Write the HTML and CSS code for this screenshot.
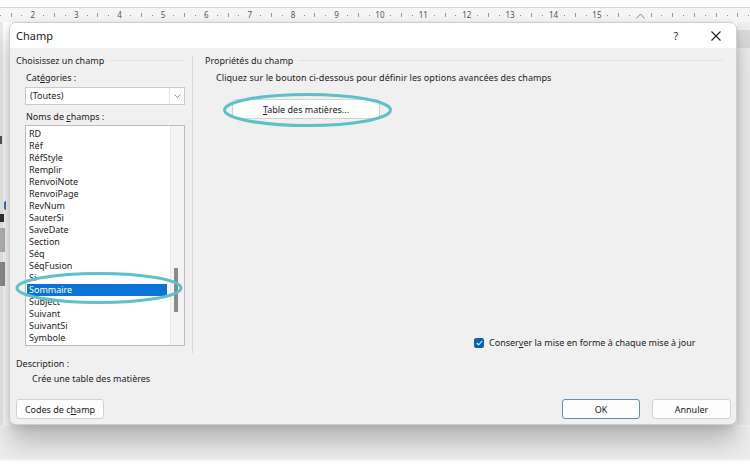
FILE: index.html
```html
<!DOCTYPE html>
<html lang="fr">
<head>
  <meta charset="UTF-8" />
  <title>Champ</title>
  <link rel="stylesheet" href="styles.css">
</head>
<body>

  <div class="ruler-top"></div>
  <div class="ruler">
    <div class="cm first"><span class="num"></span><i class="dot"></i><i class="tick"></i><i class="dot"></i></div>
    <div class="cm"><span class="num">2</span><i class="dot"></i><i class="tick"></i><i class="dot"></i></div>
    <div class="cm"><span class="num">3</span><i class="dot"></i><i class="tick"></i><i class="dot"></i></div>
    <div class="cm"><span class="num">4</span><i class="dot"></i><i class="tick"></i><i class="dot"></i></div>
    <div class="cm"><span class="num">5</span><i class="dot"></i><i class="tick"></i><i class="dot"></i></div>
    <div class="cm"><span class="num">6</span><i class="dot"></i><i class="tick"></i><i class="dot"></i></div>
    <div class="cm"><span class="num">7</span><i class="dot"></i><i class="tick"></i><i class="dot"></i></div>
    <div class="cm"><span class="num">8</span><i class="dot"></i><i class="tick"></i><i class="dot"></i></div>
    <div class="cm"><span class="num">9</span><i class="dot"></i><i class="tick"></i><i class="dot"></i></div>
    <div class="cm"><span class="num">10</span><i class="dot"></i><i class="tick"></i><i class="dot"></i></div>
    <div class="cm"><span class="num">11</span><i class="dot"></i><i class="tick"></i><i class="dot"></i></div>
    <div class="cm"><span class="num">12</span><i class="dot"></i><i class="tick"></i><i class="dot"></i></div>
    <div class="cm"><span class="num">13</span><i class="dot"></i><i class="tick"></i><i class="dot"></i></div>
    <div class="cm"><span class="num">14</span><i class="dot"></i><i class="tick"></i><i class="dot"></i></div>
    <div class="cm"><span class="num">15</span><i class="dot"></i><i class="tick"></i><i class="dot"></i></div>
    <div class="cm"><span class="num caret">
      <svg width="9" height="6" viewBox="0 0 9 6"><path d="M0.5 5.5 L4.5 1 L8.5 5.5" fill="none" stroke="#888" stroke-width="1"/></svg>
    </span><i class="tick"></i><i class="dot"></i><i class="tick"></i></div>
    <div class="cm"><i class="dot"></i><i class="tick"></i><i class="dot"></i><i class="tick"></i></div>
    <div class="cm"><i class="dot"></i><i class="tick"></i><i class="dot"></i><i class="tick"></i></div>
  </div>

  <div class="desk">
    <div class="doc-edge">
      <span class="mark mark-n"></span>
      <span class="mark mark-paren"></span>
      <span class="mark mark-e"></span>
      <span class="mark mark-block"></span>
      <span class="mark mark-block dark"></span>
    </div>

    <div class="dialog">
      <div class="titlebar">
        <span class="title">Champ</span>
        <span class="tb-btn help">?</span>
        <span class="tb-btn close">
          <svg width="10" height="10" viewBox="0 0 10 10"><path d="M0.5 0.5 L9.5 9.5 M9.5 0.5 L0.5 9.5" stroke="#222" stroke-width="1.1" fill="none"/></svg>
        </span>
      </div>

      <div class="dlg-body">
        <div class="panes">
          <div class="pane pane-left">
            <div class="group-title">Choisissez un champ</div>
            <div class="field-label">Cat<u>é</u>gories :</div>
            <div class="select">
              <span class="select-value">(Toutes)</span>
              <span class="select-arrow">
                <svg width="7" height="4" viewBox="0 0 7 4"><path d="M0.5 0.5 L3.5 3.5 L6.5 0.5" fill="none" stroke="#8a8a8a" stroke-width="1"/></svg>
              </span>
            </div>
            <div class="field-label names">Noms de <u>c</u>hamps :</div>
            <div class="listbox">
              <ul class="items">
                <li>RD</li>
                <li>Réf</li>
                <li>RéfStyle</li>
                <li>Remplir</li>
                <li>RenvoiNote</li>
                <li>RenvoiPage</li>
                <li>RevNum</li>
                <li>SauterSi</li>
                <li>SaveDate</li>
                <li>Section</li>
                <li>Séq</li>
                <li>SéqFusion</li>
                <li>Si</li>
                <li class="selected">Sommaire</li>
                <li>Subject</li>
                <li>Suivant</li>
                <li>SuivantSi</li>
                <li>Symbole</li>
              </ul>
              <div class="scrollbar"><div class="thumb"></div></div>
            </div>
          </div>

          <div class="pane pane-right">
            <div class="group-title">Propriétés du champ</div>
            <div class="hint">Cliquez sur le bouton ci-dessous pour définir les options avancées des champs</div>
            <button class="btn toc-btn"><u>T</u>able des matières...</button>
            <label class="check-row">
              <span class="checkbox">
                <svg width="7" height="6" viewBox="0 0 7 6"><path d="M0.8 3 L2.7 4.8 L6.2 1" fill="none" stroke="#fff" stroke-width="1.1"/></svg>
              </span>
              Conser<u>v</u>er la mise en forme à chaque mise à jour
            </label>
          </div>
        </div>

        <div class="desc-label">Description :</div>
        <div class="desc-text">Crée une table des matières</div>

        <div class="actions">
          <button class="btn codes-btn">Codes de c<u>h</u>amp</button>
          <button class="btn ok-btn">OK</button>
          <button class="btn cancel-btn">Annuler</button>
        </div>
      </div>

      <!-- annotations drawn over the dialog -->
      <svg class="marks" width="728" height="403" viewBox="0 0 728 403">
        <ellipse cx="89" cy="265" rx="82" ry="14.5" />
        <ellipse cx="297.5" cy="87" rx="83" ry="15.5" />
      </svg>
    </div>

    <div class="side"></div>
  </div>

</body>
</html>
```

FILE: styles.css
```css
body {
  margin: 0;
  width: 750px;
  height: 468px;
  overflow: hidden;
  background: #ffffff;
  font-family: "Noto Sans", "Open Sans", sans-serif;
  font-size: 9px;
  color: #222;
}

u {
  text-underline-offset: 1px;
}

/* ruler */
.ruler-top {
  height: 7px;
  border-bottom: 1px solid #d8d8d8;
}

.ruler {
  display: flex;
  height: 14px;
  background: #f6f6f6;
  overflow: hidden;
}

.cm {
  flex: 0 0 43.4px;
  display: grid;
  grid-template-columns: repeat(4, 1fr);
  place-items: center;
}

.cm.first {
  margin-left: -16px;
}

.num {
  font-size: 8px;
  line-height: 14px;
  color: #555;
}

.caret svg {
  display: block;
  margin-top: 2px;
}

.dot {
  width: 1px;
  height: 1px;
  background: #8c8c8c;
}

.tick {
  width: 1px;
  height: 4px;
  background: #9a9a9a;
}

/* desk below the ruler */
.desk {
  display: flex;
  height: 446px;
  background: linear-gradient(#ffffff 0 400px, #f2f2f2 406px, #ececec 436px, #ffffff 440px);
}

.doc-edge {
  width: 9px;
  flex: 0 0 9px;
  display: flex;
  flex-direction: column;
  height: 403px;
  background: linear-gradient(90deg, #eaeaea 0 3px, #ffffff 3px);
}

.mark {
  display: block;
}

.mark-n {
  width: 2px;
  height: 8px;
  margin-top: 114px;
  background: #555;
}

.mark-paren {
  width: 2px;
  height: 9px;
  margin: 57px 0 0 4px;
  border-radius: 2px 0 0 2px;
  border-left: 2px solid #3a6fc0;
}

.mark-e {
  width: 4px;
  height: 8px;
  margin-top: 4px;
  background: #333;
}

.mark-block {
  width: 5px;
  height: 24px;
  margin-top: 6px;
  background: #b5b5b5;
}

.mark-block.dark {
  margin-top: 10px;
  background: #8d8d8d;
}

.side {
  flex: 1;
  height: 403px;
  background: linear-gradient(#dcdcdc, #dcdcdc) 0 8px / 100% 18px no-repeat, #efefef;
}

/* dialog */
.dialog {
  position: relative;
  flex: 0 0 728px;
  height: 403px;
  background: #f0f0f0;
  border: 1px solid #cfcfcf;
  box-sizing: border-box;
  border-radius: 7px;
  box-shadow: 0 16px 26px rgba(0, 0, 0, 0.26), 0 2px 6px rgba(0, 0, 0, 0.12);
  overflow: hidden;
}

.titlebar {
  display: flex;
  align-items: center;
  height: 25px;
  background: #ffffff;
  padding-left: 6px;
}

.title {
  flex: 1;
  font-size: 11px;
  color: #1b1b1b;
}

.tb-btn {
  width: 40px;
  display: flex;
  justify-content: center;
  align-items: center;
  font-size: 11px;
  color: #333;
}

.help {
  padding-left: 3px;
}

.dlg-body {
  padding: 8px 5px 0 6px;
}

.panes {
  display: grid;
  grid-template-columns: 177px 1fr;
  height: 297px;
}

.pane {
  display: flex;
  flex-direction: column;
}

.pane-left {
  border-right: 1px solid #d6d6d6;
}

.pane-right {
  padding-left: 12px;
}

.group-title {
  display: flex;
  align-items: center;
  line-height: 12px;
  color: #1e1e1e;
  margin-top: -1px;
}

.group-title::after {
  content: "";
  flex: 1;
  height: 1px;
  margin: 0 8px 2px 6px;
  background: #e2e2e2;
}

.field-label {
  line-height: 12px;
  margin: 5px 0 3px 10px;
}

.field-label.names {
  margin: 6px 0 2px 10px;
}

.select {
  display: flex;
  height: 18px;
  margin-left: 9px;
  width: 160px;
  box-sizing: border-box;
  background: #ffffff;
  border: 1px solid #c9c9c9;
}

.select-value {
  flex: 1;
  line-height: 16px;
  padding-left: 4px;
}

.select-arrow {
  width: 14px;
  display: flex;
  justify-content: center;
  align-items: center;
  border-left: 1px solid #e4e4e4;
}

.listbox {
  display: flex;
  margin-left: 9px;
  width: 160px;
  height: 221px;
  box-sizing: border-box;
  background: #ffffff;
  border: 1px solid #bdbdbd;
  padding: 2px 0 1px 1px;
}

.items {
  list-style: none;
  margin: 0;
  padding: 0;
  width: 140px;
}

.items li {
  line-height: 12px;
  padding-left: 2px;
  white-space: nowrap;
}

.items li.selected {
  background: #0a74d6;
  color: #ffffff;
}

.scrollbar {
  flex: 1;
  margin: -2px 0 -1px 3px;
  background: #f4f4f4;
  border-left: 1px solid #e9e9e9;
  padding-top: 142px;
}

.thumb {
  width: 4px;
  height: 44px;
  margin-left: 3px;
  background: #8a8a8a;
}

.hint {
  line-height: 12px;
  margin: 5px 0 0 11px;
  letter-spacing: 0.06px;
}

.btn {
  font-family: inherit;
  font-size: 9px;
  color: #222;
  height: 20px;
  padding: 0;
  background: #fdfdfd;
  border: 1px solid #d3d3d3;
  border-radius: 3px;
}

.toc-btn {
  width: 148px;
  margin: 15px 0 0 27px;
}

.check-row {
  display: flex;
  align-items: center;
  line-height: 12px;
  margin: auto 0 4px 269px;
}

.checkbox {
  display: flex;
  justify-content: center;
  align-items: center;
  width: 10px;
  height: 10px;
  margin-right: 5px;
  border-radius: 2px;
  background: #0a62b8;
}

.desc-label {
  line-height: 12px;
  margin-top: 5px;
}

.desc-text {
  line-height: 12px;
  margin: 3px 0 0 16px;
}

.actions {
  display: flex;
  gap: 12px;
  margin-top: 14px;
}

.codes-btn {
  width: 88px;
  margin-right: auto;
}

.ok-btn {
  width: 78px;
  border-color: #5d8fb8;
}

.cancel-btn {
  width: 79px;
}

/* teal annotation rings */
.marks {
  position: absolute;
  left: 0;
  top: 0;
  pointer-events: none;
}

.marks ellipse {
  fill: none;
  stroke: #5ec0c9;
  stroke-width: 3;
}
```
